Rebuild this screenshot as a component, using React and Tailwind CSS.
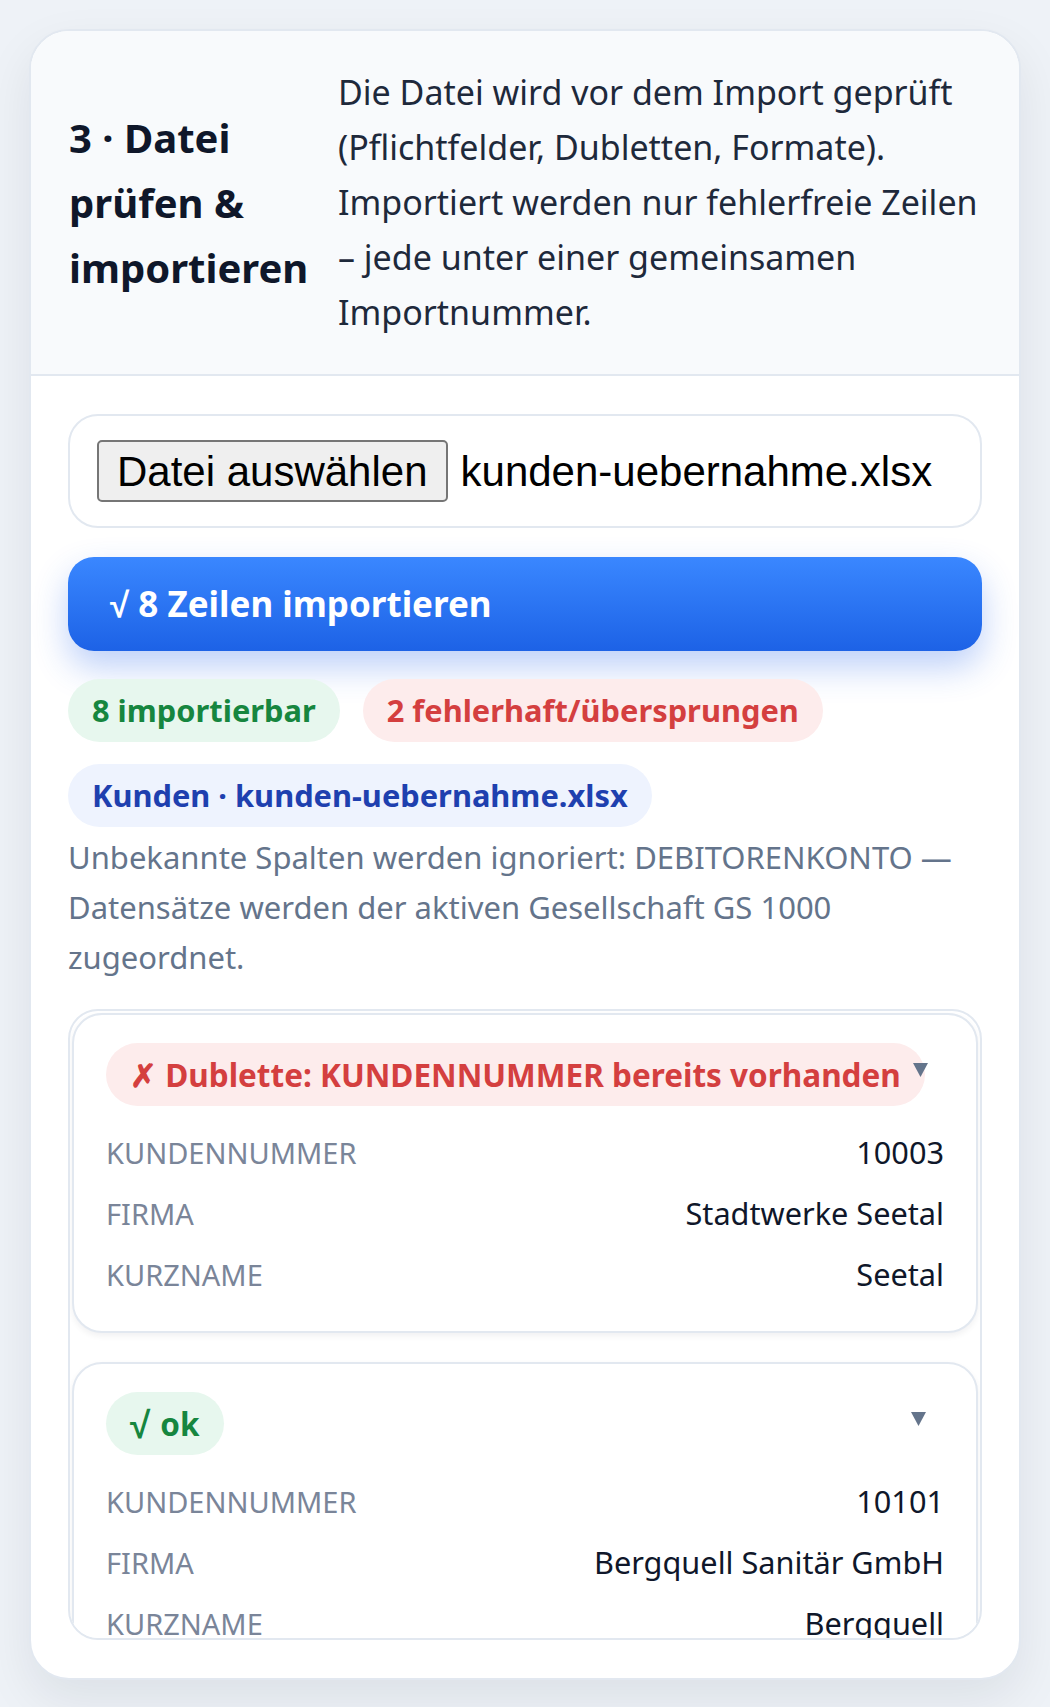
import React from 'react';

const rows = [
  {
    status: 'error',
    label: '✗ Dublette: KUNDENNUMMER bereits vorhanden',
    fields: [
      ['KUNDENNUMMER', '10003'],
      ['FIRMA', 'Stadtwerke Seetal'],
      ['KURZNAME', 'Seetal'],
    ],
  },
  {
    status: 'ok',
    label: '√ ok',
    fields: [
      ['KUNDENNUMMER', '10101'],
      ['FIRMA', 'Bergquell Sanitär GmbH'],
      ['KURZNAME', 'Bergquell'],
    ],
  },
];

const Chevron = () => (
  <svg width="15" height="14" viewBox="0 0 15 14" className="block">
    <path d="M0 0 L15 0 L7.5 14 Z" fill="#64748b" />
  </svg>
);

const RowCard = ({ row }) => {
  const isError = row.status === 'error';
  return (
    <div className="rounded-[30px] border-2 border-[#e2e8f0] bg-white px-[32px] pt-[28px] pb-[26px] shadow-[0_3px_6px_rgba(15,23,42,0.06)]">
      <div className="flex items-center justify-between">
        <span
          className={
            isError
              ? 'shrink-0 rounded-full bg-[#fdecec] px-[24px] h-[63px] flex items-center text-[31.5px] font-bold text-[#d43f3f]'
              : 'shrink-0 rounded-full bg-[#e7f7ee] px-[24px] h-[63px] flex items-center text-[31.5px] font-bold text-[#16863f]'
          }
        >
          {isError ? row.label : (
            <>
              <span className="text-[37px] leading-none">√</span>
              <span className="ml-[10px]">ok</span>
            </>
          )}
        </span>
        <span className={isError ? '-ml-[12px] mr-[18px] -mt-[10px]' : 'mr-[18px] -mt-[10px]'}>
          <Chevron />
        </span>
      </div>
      <div className="mt-[16px] flex flex-col">
        {row.fields.map(([k, v]) => (
          <div key={k} className="flex items-center justify-between h-[61px]">
            <span className="text-[29px] text-[#7a8599]">{k}</span>
            <span className="text-[30.7px] text-[#0f172a]">{v}</span>
          </div>
        ))}
      </div>
    </div>
  );
};

export default function App() {
  return (
    <div className="min-h-[1707px] bg-[#eef2f7] p-[29px] font-['Noto_Sans',sans-serif]">
      <div className="overflow-hidden rounded-[40px] border-2 border-[#e2e8f0] bg-white shadow-[0_20px_50px_rgba(15,23,42,0.08)]">
        {/* header */}
        <div className="flex items-center gap-[24px] bg-[#f8fafc] pl-[38px] pr-[32px] py-[34px] border-b-2 border-[#e2e8f0]">
          <h2 className="w-[245px] shrink-0 text-[40px] font-bold leading-[65px] text-[#0f172a]">
            3 · Datei prüfen &amp; importieren
          </h2>
          <p className="text-[34px] leading-[55px] text-[#1e293b]">
            Die Datei wird vor dem Import geprüft (Pflichtfelder, Dubletten, Formate). Importiert werden nur fehlerfreie Zeilen – jede unter einer gemeinsamen Importnummer.
          </p>
        </div>

        {/* body */}
        <div className="px-[37px] pt-[38px] pb-[38px]">
          <div className="flex items-center gap-[13px] rounded-[30px] border-2 border-[#e2e8f0] bg-white px-[27px] h-[114px] font-['Liberation_Sans',Arial,sans-serif] text-[42px] text-black">
            <span className="flex h-[62px] items-center rounded-[5px] border-2 border-[#767676] bg-[#efefef] px-[18px]">
              Datei auswählen
            </span>
            <span>kunden-uebernahme.xlsx</span>
          </div>

          <button className="mt-[29px] flex h-[94px] w-full items-center rounded-[26px] bg-gradient-to-b from-[#3a87ff] to-[#1d62e6] px-[42px] text-[35px] font-bold text-white shadow-[0_16px_34px_rgba(37,99,235,0.3)]">
            √ 8 Zeilen importieren
          </button>

          <div className="mt-[28px] flex flex-wrap gap-x-[23px] gap-y-[22px]">
            <span className="flex h-[63px] items-center rounded-full bg-[#e7f7ee] px-[24px] text-[30.8px] font-bold text-[#16863f]">
              8 importierbar
            </span>
            <span className="flex h-[63px] items-center rounded-full bg-[#fdecec] px-[24px] text-[30.8px] font-bold text-[#d43f3f]">
              2 fehlerhaft/übersprungen
            </span>
            <span className="flex h-[63px] items-center rounded-full bg-[#eef3fe] px-[24px] text-[30.8px] font-bold text-[#1e40af]">
              Kunden · kunden-uebernahme.xlsx
            </span>
          </div>

          <p className="mt-[5px] text-[31px] leading-[50px] text-[#64748b]">
            Unbekannte Spalten werden ignoriert: DEBITORENKONTO — Datensätze werden der aktiven Gesellschaft GS 1000 zugeordnet.
          </p>

          <div className="mt-[27px] h-[631px] overflow-hidden rounded-[30px] border-2 border-[#e2e8f0] p-[2px]">
            <div className="flex flex-col gap-[29px]">
              {rows.map((r, i) => (
                <RowCard key={i} row={r} />
              ))}
            </div>
          </div>
        </div>
      </div>
    </div>
  );
}
